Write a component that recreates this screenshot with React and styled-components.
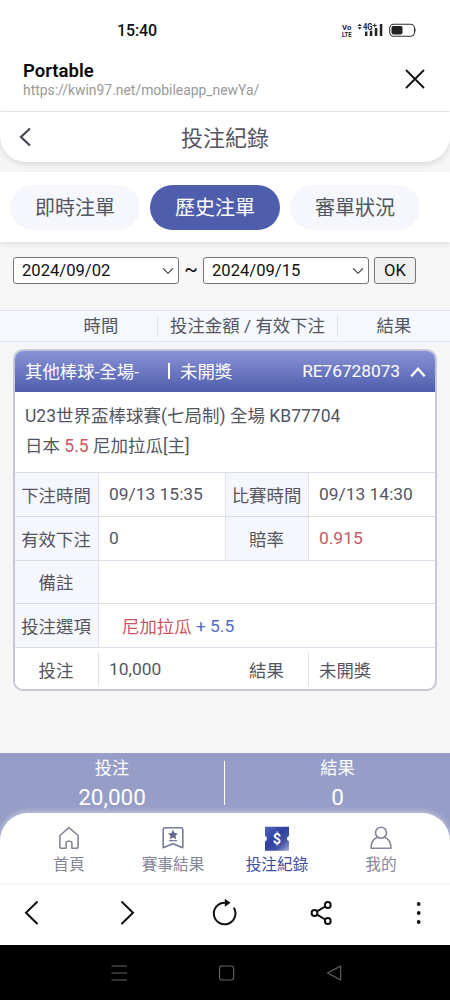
import React from "react";
import styled, { createGlobalStyle } from "styled-components";

const Global = createGlobalStyle`
  * { box-sizing: border-box; }
  body {
    margin: 0;
    background: #f6f6f6;
    font-family: Roboto, "Noto Sans CJK TC", sans-serif;
    font-weight: 400;
    color: #54565f;
  }
  button, select { font-family: inherit; }
`;

const Screen = styled.div`
  width: 450px;
  height: 1000px;
  display: flex;
  flex-direction: column;
  overflow: hidden;
  background: #f6f6f6;
`;

const StatusBar = styled.div`
  height: 60px;
  flex: none;
  display: flex;
  align-items: center;
  justify-content: space-between;
  padding: 0 32px 0 117px;
  background: #fff;
`;

const Clock = styled.span`
  margin-top: 2px;
  font-size: 16px;
  font-weight: 500;
  line-height: 20px;
  color: #111;
  letter-spacing: -0.1px;
`;

const BrowserHeader = styled.header`
  height: 52px;
  flex: none;
  display: flex;
  justify-content: space-between;
  padding: 1px 25px 0 23px;
  background: #fff;
  border-bottom: 1px solid #ececec;
`;

const PageInfo = styled.div`
  display: flex;
  flex-direction: column;
`;

const PageTitle = styled.strong`
  font-size: 18.5px;
  font-weight: 600;
  line-height: 20px;
  color: #0a0a0a;
`;

const PageUrl = styled.span`
  font-size: 13.9px;
  line-height: 18px;
  color: #999;
`;

const CloseIcon = styled.svg`
  margin-top: 7.5px;
`;

const TitleBar = styled.div`
  height: 50px;
  flex: none;
  display: flex;
  align-items: center;
  padding-top: 4px;
  background: #fff;
  border-radius: 0 0 26px 26px;
  box-shadow: 0 2px 6px rgba(0, 0, 0, 0.13);
`;

const BackIcon = styled.svg`
  margin-left: 18px;
  margin-top: -4px;
`;

const Title = styled.h1`
  flex: 1;
  margin: 0 32px 0 0;
  text-align: center;
  font-size: 22px;
  font-weight: 400;
  line-height: 30px;
`;

const Tabs = styled.nav`
  height: 70px;
  flex: none;
  margin-top: 10px;
  display: flex;
  align-items: center;
  gap: 10px;
  padding: 0 10px;
  background: #fff;
  box-shadow: 0 2px 5px rgba(0, 0, 0, 0.09);
`;

const Tab = styled.button`
  width: 130px;
  height: 45px;
  padding: 0 0 1px;
  border: 0;
  border-radius: 23px;
  font-size: 20px;
  background: ${(p) => (p.$active ? "#4f5dad" : "#f6f7fc")};
  color: ${(p) => (p.$active ? "#fff" : "#54565f")};
`;

const Filters = styled.div`
  height: 27px;
  flex: none;
  margin: 15px 0 26px;
  padding-left: 13px;
  display: flex;
  align-items: stretch;
  color: #111;
`;

const DateSelect = styled.div`
  width: 166px;
  display: flex;
  align-items: center;
  justify-content: space-between;
  padding: 0 4px 0 8px;
  border: 1px solid #767676;
  border-radius: 3px;
  background: #fff;
  font-size: 16.6px;
  line-height: 20px;
`;

const Tilde = styled.span`
  width: 24px;
  text-align: center;
  font-size: 20px;
  line-height: 25px;
`;

const OkButton = styled.button`
  width: 42px;
  margin-left: 5px;
  padding: 0;
  border: 1px solid #767676;
  border-radius: 3px;
  background: #efefef;
  color: #111;
  font-size: 16.6px;
`;

const ListHead = styled.div`
  height: 32px;
  flex: none;
  display: grid;
  grid-template-columns: 158px 180px 112px;
  align-items: center;
  background: #f5f8ff;
  border: solid #dfe4f4;
  border-width: 1px 0;
`;

const HeadCell = styled.span`
  height: 22px;
  line-height: 22px;
  font-size: 17.4px;
  text-align: center;
  padding-left: ${(p) => p.$indent || 0}px;
  border-right: ${(p) => (p.$last ? "0" : "1px solid #dde1f0")};
`;

const Card = styled.section`
  flex: none;
  margin: 7px 13px 0;
  height: 342px;
  border: 2px solid #c6c8da;
  border-radius: 10px;
  background: #fff;
  overflow: hidden;
  font-size: 17.4px;
`;

const CardHeader = styled.div`
  height: 43px;
  margin: -2px -1px 0;
  display: flex;
  align-items: center;
  padding: 0 10px 0 11px;
  background: linear-gradient(#8b95d7, #4f5dad);
  color: #fff;
`;

const League = styled.span`
  width: 142.5px;
`;

const Bar = styled.i`
  width: 2.5px;
  height: 16px;
  margin-right: 10px;
  background: #fff;
`;

const Ticket = styled.span`
  margin-left: auto;
  margin-right: 10px;
  letter-spacing: -0.1px;
`;

const Match = styled.div`
  height: 80px;
  padding: 9px 10px 0;
  line-height: 30px;
  font-size: 17.5px;
`;

const Red = styled.span`
  color: #ca5661;
`;

const Blue = styled.span`
  color: #526bc4;
`;

const Row = styled.div`
  height: 43.75px;
  display: grid;
  grid-template-columns: ${(p) => (p.$wide ? "84px 1fr" : "84px 127px 83px 1fr")};
  border-top: 1px solid #dbdde8;
  align-items: ${(p) => (p.$plain ? "center" : "stretch")};
`;

const Label = styled.div`
  display: flex;
  align-items: center;
  justify-content: center;
  padding-right: 1px;
  height: ${(p) => (p.$plain ? "34px" : "auto")};
  background: ${(p) => (p.$plain ? "#fff" : "#f6f7fd")};
  border-right: 1px solid #e0e1ec;
`;

const Value = styled.div`
  display: flex;
  align-items: center;
  padding-left: ${(p) => p.$indent || 10}px;
  border-right: ${(p) => (p.$divided ? "1px solid #e0e1ec" : "0")};
  white-space: pre;
`;

const Summary = styled.div`
  height: 96px;
  flex: none;
  margin-top: 62px;
  display: grid;
  grid-template-columns: 225px 225px;
  background: #969dc6;
  color: #fff;
`;

const Total = styled.div`
  height: 44px;
  margin-top: 8px;
  display: flex;
  flex-direction: column;
  align-items: center;
  border-right: ${(p) => (p.$divided ? "1px solid #fff" : "0")};
`;

const TotalLabel = styled.span`
  font-size: 17.2px;
  line-height: 20px;
  margin-top: -3px;
`;

const TotalValue = styled.span`
  font-size: 22.5px;
  line-height: 26px;
  margin-top: 6px;
`;

const BottomNav = styled.nav`
  height: 70px;
  flex: none;
  margin-top: -36px;
  padding: 12px 17px 0;
  display: grid;
  grid-template-columns: repeat(4, 104px);
  background: #fff;
  border-radius: 28px 28px 0 0;
  box-shadow: 0 -1px 6px rgba(255, 255, 255, 0.5);
  position: relative;
`;

const NavItem = styled.div`
  display: flex;
  flex-direction: column;
  align-items: center;
  font-size: 15.7px;
  line-height: 20px;
  gap: 4px;
  color: ${(p) => (p.$active ? "#414e9f" : "#858799")};
`;

const BrowserBar = styled.div`
  height: 62px;
  flex: none;
  display: flex;
  justify-content: space-between;
  align-items: center;
  padding: 0 19px 4px 18px;
  background: #fff;
  border-top: 2px solid #f6f6f6;
`;

const SystemBar = styled.div`
  height: 55px;
  flex: none;
  display: flex;
  align-items: center;
  gap: 84px;
  padding-left: 107px;
  background: #000;
`;

const SignalIcons = () => (
  <svg width="78" height="20" viewBox="340 20 78 20" fontFamily="Roboto, sans-serif" fontWeight="700" fill="#222">
    <text x="342" y="29.5" fontSize="7.5" textLength="9.300" lengthAdjust="spacingAndGlyphs">Vo</text>
    <text x="342" y="37" fontSize="7.5" textLength="9.700" lengthAdjust="spacingAndGlyphs">LTE</text>
    <path d="M357.7 26l2-2.3 2 2.3zM357.7 27.3h4l-2 2.2z" />
    <text x="363" y="30" fontSize="8.8" textLength="9.5" lengthAdjust="spacingAndGlyphs">4G</text>
    <path d="M372.700 25h1.500v-1.500h1V25h1.500v1h-1.500v1.500h-1V26h-1.500z" />
    <path d="M365 31.5h2.4v4.5H365zM369.8 30.800h2.5v5.200h-2.5zM374.8 28h2.5V36h-2.500zM379.800 24h2.500v12h-2.500z" />
    <rect x="389.7" y="24.2" width="24.8" height="12" rx="4" fill="none" stroke="#333" strokeWidth="1.1" />
    <rect x="391.5" y="26" width="11" height="8.4" rx="1.8" />
    <path d="M415.3 28v4.5q1.5-2.2 0-4.5z" />
  </svg>
);

const Chevron = () => (
  <svg width="12" height="8" viewBox="0 0 12 8" fill="none" stroke="#333" strokeWidth="1.1">
    <path d="M1 1.3l5 5 5-5" />
  </svg>
);

const HomeIcon = () => (
  <svg width="24" height="26" viewBox="0 0 24 26" fill="none" stroke="#858799" strokeWidth="1.6" strokeLinejoin="round">
    <path d="M2.900 10.500L12 2.700l9.100 7.800v11q0 1.800-1.800 1.800H14.900v-5q0-2-2-2h-1.800q-2 0-2 2v5H4.700q-1.800 0-1.800-1.800z" />
  </svg>
);

const ResultIcon = () => (
  <svg width="24" height="26" viewBox="0 0 24 26" fill="none" stroke="#777a96" strokeWidth="1.6" strokeLinejoin="round">
    <path d="M4.200 2.700h15.600q2 0 2 2v18l-9.800-4-9.800 4v-18q0-2 2-2z" />
    <path d="M12 4.700l1.500 3.200 3.500.5-2.500 2.400.7 3.500-3.200-1.700-3.200 1.700.7-3.500-2.500-2.400 3.500-.5z" fill="#626991" stroke="none" />
    <path d="M8 15.600h8" strokeWidth="1.300" />
  </svg>
);

const RecordIcon = () => (
  <svg width="24" height="26" viewBox="0 0 24 26">
    <defs>
      <linearGradient id="ticket" x1="0" y1="0" x2="1" y2="1">
        <stop offset="0" stopColor="#5363bc" />
        <stop offset="0.450" stopColor="#3040a0" />
        <stop offset="0.700" stopColor="#4451a5" />
        <stop offset="1" stopColor="#a6aede" />
      </linearGradient>
    </defs>
    <path d="M0 1.700h24V11a2.700 2.700 0 0 0 0 5.200V25.700H0V16.200A2.700 2.700 0 0 0 0 11z" fill="url(#ticket)" />
    <text x="12" y="18.500" textAnchor="middle" fontFamily="Roboto, sans-serif" fontSize="14.500" fontWeight="700" fill="#fff">$</text>
  </svg>
);

const UserIcon = () => (
  <svg width="24" height="26" viewBox="0 0 24 26" fill="none" stroke="#858799" strokeWidth="1.600" strokeLinejoin="round">
    <circle cx="12" cy="7.800" r="5.500" />
    <path d="M8.300 12.300C4.300 14 2 17.500 2 23.200h20c0-5.700-2.300-9.200-6.300-10.900" />
  </svg>
);

const navItems = [
  ["首頁", HomeIcon],
  ["賽事結果", ResultIcon],
  ["投注紀錄", RecordIcon],
  ["我的", UserIcon],
];

const tabs = ["即時注單", "歷史注單", "審單狀況"];

export default function App() {
  return (
    <Screen>
      <Global />
      <StatusBar>
        <Clock>15:40</Clock>
        <SignalIcons />
      </StatusBar>
      <BrowserHeader>
        <PageInfo>
          <PageTitle>Portable</PageTitle>
          <PageUrl>https://kwin97.net/mobileapp_newYa/</PageUrl>
        </PageInfo>
        <CloseIcon width="20" height="20" viewBox="0 0 20 20" stroke="#111" strokeWidth="1.800" strokeLinecap="round">
          <path d="M1.500 1.500l17 17M18.500 1.500l-17 17" />
        </CloseIcon>
      </BrowserHeader>

      <TitleBar>
        <BackIcon width="14" height="20" viewBox="0 0 14 20" fill="none" stroke="#484a55" strokeWidth="2.300">
          <path d="M12 1.500L3 10l9 8.500" />
        </BackIcon>
        <Title>投注紀錄</Title>
      </TitleBar>

      <Tabs>
        {tabs.map((name, i) => (
          <Tab key={name} $active={i === 1}>{name}</Tab>
        ))}
      </Tabs>

      <Filters>
        <DateSelect>2024/09/02<Chevron /></DateSelect>
        <Tilde>~</Tilde>
        <DateSelect>2024/09/15<Chevron /></DateSelect>
        <OkButton>OK</OkButton>
      </Filters>

      <ListHead>
        <HeadCell $indent={45}>時間</HeadCell>
        <HeadCell>投注金額 / 有效下注</HeadCell>
        <HeadCell $last>結果</HeadCell>
      </ListHead>

      <Card>
        <CardHeader>
          <League>其他棒球-全場-</League>
          <Bar />
          <span>未開獎</span>
          <Ticket>RE76728073</Ticket>
          <svg width="16" height="12" viewBox="0 0 16 12" fill="none" stroke="#fff" strokeWidth="2.300">
            <path d="M1.300 11.300L8 3.800l6.700 7.500" />
          </svg>
        </CardHeader>
        <Match>
          <div>U23世界盃棒球賽(七局制) 全場 KB77704</div>
          <div>日本 <Red>5.5</Red> 尼加拉瓜[主]</div>
        </Match>
        <Row>
          <Label>下注時間</Label>
          <Value $divided>09/13 15:35</Value>
          <Label>比賽時間</Label>
          <Value>09/13 14:30</Value>
        </Row>
        <Row>
          <Label>有效下注</Label>
          <Value $divided>0</Value>
          <Label>賠率</Label>
          <Value><Red>0.915</Red></Value>
        </Row>
        <Row $wide>
          <Label>備註</Label>
          <Value />
        </Row>
        <Row $wide>
          <Label>投注選項</Label>
          <Value $indent={23}><Red>尼加拉瓜</Red><Blue> + 5.5</Blue></Value>
        </Row>
        <Row $plain>
          <Label $plain>投注</Label>
          <Value>10,000</Value>
          <Label $plain>結果</Label>
          <Value>未開獎</Value>
        </Row>
      </Card>

      <Summary>
        <Total $divided>
          <TotalLabel>投注</TotalLabel>
          <TotalValue>20,000</TotalValue>
        </Total>
        <Total>
          <TotalLabel>結果</TotalLabel>
          <TotalValue>0</TotalValue>
        </Total>
      </Summary>

      <BottomNav>
        {navItems.map(([name, Icon], i) => (
          <NavItem key={name} $active={i === 2}>
            <Icon />
            {name}
          </NavItem>
        ))}
      </BottomNav>

      <BrowserBar>
        <svg width="26" height="28" viewBox="0 0 26 28" fill="none" stroke="#111" strokeWidth="2" strokeLinecap="round">
          <path d="M19 3L8 13.700 19 24.500" />
        </svg>
        <svg width="26" height="28" viewBox="-1 0 26 28" fill="none" stroke="#111" strokeWidth="2" strokeLinecap="round">
          <path d="M7 3l11 10.700L7 24.500" />
        </svg>
        <svg width="28" height="30" viewBox="0.500 0 28 30" fill="none" stroke="#111" strokeWidth="2">
          <path d="M23.600 10.300A10.800 10.800 0 1 1 14 4.700h2" strokeLinecap="round" />
          <path d="M14.300.700l5.800 4-5.800 4z" fill="#111" stroke="none" />
        </svg>
        <svg width="26" height="28" viewBox="0.500 0 26 28" fill="none" stroke="#111" strokeWidth="2">
          <circle cx="6" cy="14" r="2.900" />
          <circle cx="19.300" cy="6" r="2.900" />
          <circle cx="19.300" cy="22" r="2.900" />
          <path d="M8.600 12.400l8.100-4.900M8.600 15.600l8.100 4.900" />
        </svg>
        <svg width="26" height="28" viewBox="0 0 26 28" fill="#111">
          <circle cx="13.700" cy="5" r="1.900" />
          <circle cx="13.700" cy="14" r="1.900" />
          <circle cx="13.700" cy="23" r="1.900" />
        </svg>
      </BrowserBar>

      <SystemBar>
        <svg width="24" height="24" viewBox="0 0 24 24" stroke="#666" strokeWidth="1">
          <path d="M4.500 5h15.500M4.500 12h15.500M4.500 19h15.500" />
        </svg>
        <svg width="24" height="24" viewBox="0 0 24 24" fill="none" stroke="#666" strokeWidth="1.100">
          <rect x="4.500" y="5" width="14.200" height="14" rx="2.500" />
        </svg>
        <svg width="24" height="24" viewBox="0 0 24 24" fill="none" stroke="#666" strokeWidth="1.100" strokeLinejoin="round">
          <path d="M4.500 12L17.700 5v14z" />
        </svg>
      </SystemBar>
    </Screen>
  );
}
